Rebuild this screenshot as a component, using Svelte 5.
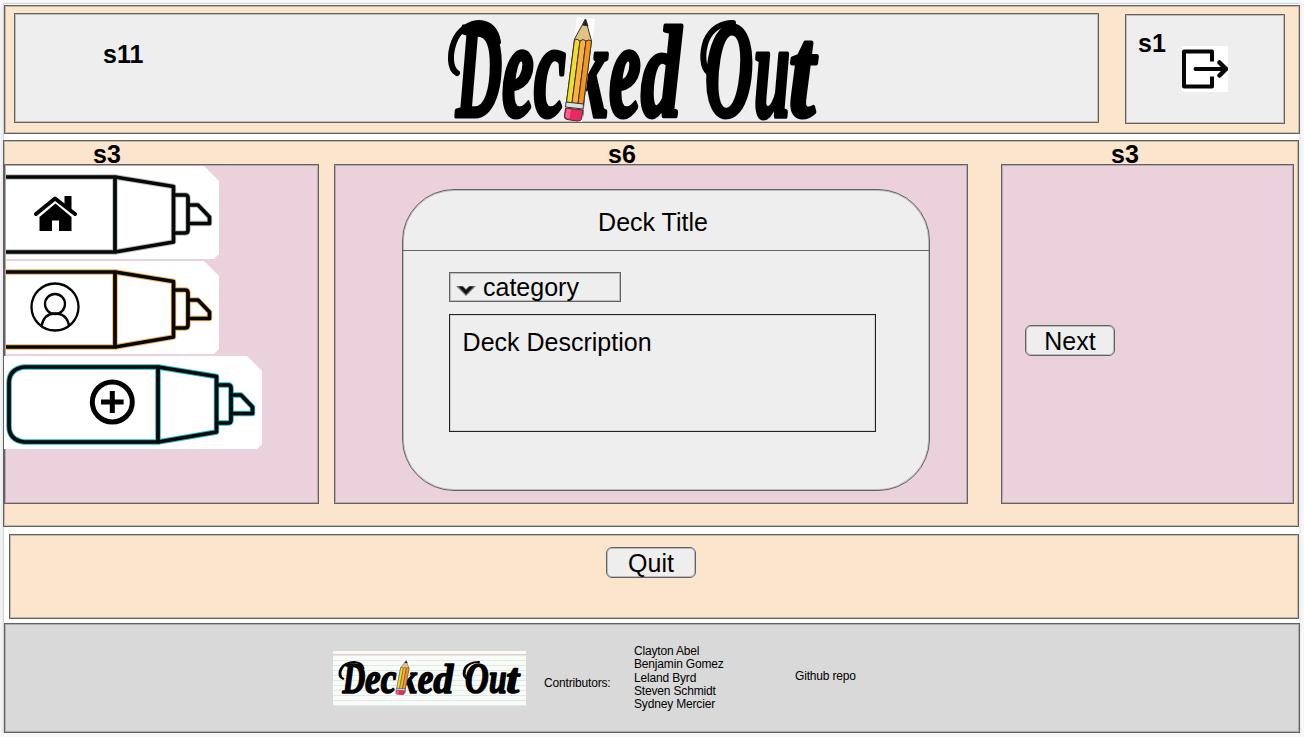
<script>
  const contributors = ['Clayton Abel', 'Benjamin Gomez', 'Leland Byrd', 'Steven Schmidt', 'Sydney Mercier'];
  const markers = [
    { kind: 'home', halo: '#bdbdbd', width: 213, start: 45 },
    { kind: 'user', halo: '#f2ad55', width: 213, start: 45 },
    { kind: 'add', halo: '#20b5c5', width: 258, start: 0 }
  ];
</script>

{#snippet logo(name)}
  <svg class="logo" viewBox="445 14 380 108" preserveAspectRatio="none" role="img" aria-label="Decked Out">
    <clipPath id="{name}-k"><path d="M583 50H612V122H583Z" /></clipPath>
    <g class="lettering">
      <text class="cap" transform="translate(456 116) scale(.47 1)">D</text>
      <text class="small" transform="translate(502 116) scale(.53 1)">e</text>
      <text class="small" transform="translate(534 116) scale(.53 1)">c</text>
      <g clip-path="url(#{name}-k)"><text class="small" transform="translate(571 116) scale(.55 1)">k</text></g>
      <text class="small" transform="translate(609 116) scale(.53 1)">e</text>
      <text class="tall" transform="translate(641 116) scale(.62 1)">d</text>
      <text class="cap" transform="translate(705 116) scale(.49 1)">O</text>
      <text class="small" transform="translate(754 116) scale(.48 1)">u</text>
      <text class="tall" transform="translate(789 116) scale(.72 1)">t</text>
    </g>
    <path class="swash" d="M457 73C449 68 450 53 454 42C459 29 470 23 480 23C490 24 496 30 498 42" />
    <path class="swash" d="M709 73C702 67 702 53 706 41C711 29 721 23 733 23" />
    <path d="M577 17L595 19L582 122L563 120Z" fill="#fff" />
    <g stroke="#343434" stroke-width="1" stroke-linejoin="round">
      <path d="M574.5 39L585.5 19L591.5 41L583.5 104L566.5 102Z" fill="#e2c284" />
      <path d="M574.5 40Q577 38 580 41L572 103L566.5 102Z" fill="#f3de27" />
      <path d="M580 41Q583 38 586 41L578 104L572 103Z" fill="#fbb040" />
      <path d="M586 41Q589 39 591.5 41L583.5 104L578 104Z" fill="#f7941e" />
      <path d="M582.5 25L585.5 19L588 26Z" fill="#222" />
      <path d="M566 102L583.5 104L583 109L565.5 107Z" fill="#dedede" />
      <path d="M565.5 108L583 110L581.5 119Q581 121.5 577 121L567 119.5Q564 119 564.4 116Z" fill="#ed2860" />
    </g>
    <path d="M567 109L571 109.5L569.5 118.5L567 118Q565 117 565.5 115Z" fill="#ff5d8d" />
  </svg>
{/snippet}

<div class="canvas">
  <header class="frame band top">
    <div class="frame tile brand">
      <span class="size">s11</span>
      {@render logo('header')}
    </div>
    <div class="frame tile exit">
      <span class="size">s1</span>
      <svg width="46" height="46" viewBox="0 0 46 46" aria-label="Log out">
        <rect width="46" height="46" fill="#fff" />
        <g fill="none" stroke="#060606" stroke-width="4" stroke-linecap="round" stroke-linejoin="round">
          <path d="M30 15.5V5.5H2V40.5H30V30.5" stroke-linecap="butt" />
          <path d="M13.5 23H44" />
          <path d="M37.5 16.5L44 23L37.5 29.5" stroke-width="4.5" />
        </g>
      </svg>
    </div>
  </header>

  <main class="frame band work">
    <section class="column">
      <h2 class="left-label">s3</h2>
      <nav class="frame panel">
        {#each markers as marker}
          <svg class="marker {marker.kind}" width={marker.width} height="93" viewBox="{marker.start} 0 {marker.width} 93">
            <path d="M0 0H243L258 15V88L253 93H0Z" fill="#fff" />
            {#each [marker.halo, '#050808'] as colour, layer}
              <g fill="none" stroke={colour} stroke-width={layer === 0 ? 5.4 : 3.7} stroke-linejoin="round">
                <path d="M154 11H20Q5 13 5 27V70Q5 84 20 86H154Z" />
                <path d="M154 11L212.5 20.5V76L154 86" />
                <path d="M213.5 29H224Q227 29 227 32V64Q227 67 224 67H213.5" />
                <path d="M228 39H237L248.5 51V57.5H228" />
              </g>
            {/each}
            {#if marker.kind === 'home'}
              <path d="M75 48L94 32.5L114 48" fill="none" stroke="#000" stroke-width="4" stroke-linecap="round" stroke-linejoin="round" />
              <path d="M103.5 30H110.5V44L103.5 39Z" />
              <path d="M94.5 37.5L110.5 51V65H98V54.5H91V65H78.5V51Z" />
            {:else if marker.kind === 'user'}
              <g fill="none" stroke="#000" stroke-width="2.3">
                <circle cx="94" cy="46" r="23.5" />
                <circle cx="94" cy="43" r="10" />
                <path d="M80.5 65Q83 52.5 94 52.5Q106 52.5 108 65" />
              </g>
            {:else}
              <g fill="none" stroke="#000" stroke-width="5">
                <circle cx="108.3" cy="46" r="20" />
                <path d="M97 46H119.6M108.3 35V57" />
              </g>
            {/if}
          </svg>
        {/each}
      </nav>
    </section>

    <section class="column">
      <h2 class="mid-label">s6</h2>
      <div class="frame panel center">
        <article class="frame card">
          <h1>Deck Title</h1>
          <div class="fields">
            <div class="frame category">
              <svg width="20" height="12" viewBox="0 0 20 12"><path d="M0 1H7L10 4L13 1H20L10 11Z" fill="#777" /><path d="M2.5 1.5H6.5L10 5L13.5 1.5H17.5L10 9.5Z" fill="#111" /></svg>
              <span>category</span>
            </div>
            <div class="description">Deck Description</div>
          </div>
        </article>
      </div>
    </section>

    <section class="column">
      <h2 class="right-label">s3</h2>
      <div class="frame panel next"><button class="frame">Next</button></div>
    </section>
  </main>

  <section class="frame band quit"><button class="frame">Quit</button></section>

  <footer class="frame">
    <div class="note-card">{@render logo('footer')}</div>
    <span class="contributors">Contributors:</span>
    <ul>{#each contributors as person}<li>{person}</li>{/each}</ul>
    <span class="repo">Github repo</span>
  </footer>
</div>

<style>
  :global(body) { margin: 0; background: #f7f8fa; }
  * { box-sizing: border-box; }
  .canvas {
    width: 1296px; height: 730px; margin-left: 3px; padding: 1px 0 0;
    border-left: 1px solid #d5d5d5; border-top: 1px solid #d0d2d5;
    background: #fff; box-shadow: 0 2px 4px #d9dadd;
    font: 25px/28px "Liberation Sans", Arial, sans-serif; color: #000;
    display: flow-root; margin-top: 3px;
  }
  .frame { border: 1px solid #626262; box-shadow: inset 0 0 0 1px #59595955; }
  .band { background: #fce5cd; }
  .top { width: 1296px; height: 129px; display: flex; align-items: flex-start; padding: 7px 0 0 9px; }
  .tile { background: #eee; display: flex; }
  .brand { width: 1085px; height: 110px; }
  .brand .size { width: 342px; padding: 26px 0 0 88px; flex: none; }
  .size { font-weight: bold; }
  .brand .logo { width: 380px; height: 108px; margin-left: 88px; }
  .exit { width: 160px; height: 110px; margin: 1px 0 0 26px; padding: 14px 0 0 12px; }
  .exit svg { margin: 17px 0 0 16px; }
  .work { width: 1296px; height: 387px; margin: 6px 0 0 -1px; display: grid; grid-template-columns: 315px 634px 293px; column-gap: 15px; }
  .work .column:last-child { margin-left: 18px; width: 293px; }
  .column { display: flex; flex-direction: column; }
  h1, h2 { margin: 0; font-size: 25px; line-height: 28px; }
  h2 { height: 23px; line-height: 27px; }
  .left-label { padding-left: 89px; }
  .mid-label { padding-left: 274px; }
  .right-label { padding-left: 110px; }
  .panel { height: 340px; background: #ead1dc; }
  nav.panel { display: flex; flex-direction: column; gap: 2px; padding: 1px 0 0 1px; }
  .marker { display: block; flex: none; }
  .marker.add { margin-left: -2px; }
  .center { padding: 24px 0 0 67px; }
  .card { width: 528px; height: 302px; background: #eee; border-radius: 52px; overflow: hidden; }
  h1 { height: 61px; padding: 18px 26px 0 0; border-bottom: 1px solid #626262; font-weight: normal; text-align: center; }
  .fields { padding: 21px 0 0 46px; display: grid; gap: 12px; }
  .category { width: 172px; height: 30px; display: flex; padding: 0 0 0 6px; gap: 7px; }
  .category svg { margin-top: 12px; flex: none; }
  .description { width: 427px; height: 118px; border: 1px solid #222; box-shadow: inset 0 0 0 1px #2222; padding: 13px 12.6px; }
  .next { padding: 160px 0 0 23px; }
  button { display: flex; justify-content: center; align-items: center; width: 90px; height: 31px; background: #eee; border-radius: 6px; font: inherit; color: #000; padding: 1px 0 0; }
  .quit { width: 1290px; height: 85px; margin: 7px 0 0 5px; display: flex; justify-content: center; align-items: flex-start; padding: 12px 6px 0 0; }
  footer { width: 1296px; height: 110px; margin-top: 4px; background: #d9d9d9; display: flex; align-items: flex-start; font-size: 12px; letter-spacing: -.17px; line-height: 13.3px; }
  .note-card {
    width: 193px; height: 55px; margin: 27px 0 0 328px; padding: 8px 3px 11px 4px; flex: none;
    background: linear-gradient(transparent 3px, #edcaca 3px 4px, transparent 4px),
      repeating-linear-gradient(#f9fbf7 0 4px, #dceae8 4px 5px);
  }
  .note-card .logo { width: 187px; height: 36px; }
  .contributors { width: 90px; margin: 53px 0 0 18px; }
  ul { list-style: none; margin: 21px 0 0; padding: 0; width: 161px; }
  .repo { margin-top: 46px; }
  .logo { display: block; flex: none; overflow: visible; }
  .lettering { font-family: "Liberation Serif", serif; font-weight: bold; font-style: italic; stroke: #000; stroke-width: 5; stroke-linejoin: round; }
  .cap { font-size: 136px; }
  .small { font-size: 135px; }
  .tall { font-size: 129px; }
  .swash { fill: none; stroke: #000; stroke-width: 6; stroke-linecap: round; }
</style>
